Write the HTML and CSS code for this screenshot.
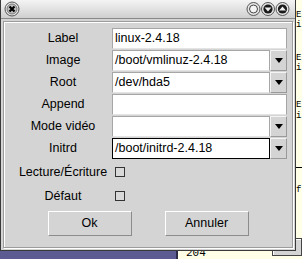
FILE: index.html
```html
<!DOCTYPE html>
<html>
<head>
<meta charset="utf-8">
<link rel="stylesheet" href="styles.css">
</head>
<body>
<div class="desk">
  <div class="term">
    <div class="tl t1">E</div>
    <div class="tl t2">i</div>
    <div class="tl t3">E</div>
    <div class="tl t4">i</div>
    <div class="tl t5">E</div>
    <div class="tl t6">i</div>
    <div class="rule"></div>
    <div class="tl t7">f</div>
  </div>
  <div class="taskbar"></div>
  <div class="term-bottom">204</div>
  <div class="bgframe"></div>

  <div class="win">
    <div class="titlebar">
      <svg class="tbtn" width="16" height="16" viewBox="0 0 16 16">
        <circle cx="8" cy="8" r="7" fill="#e6e6e6" stroke="#555" stroke-width="1"/>
        <circle cx="8" cy="8" r="5" fill="#bdbdbd" stroke="#7a7a7a" stroke-width="1"/>
        <path d="M5.5 5.5 L10.5 10.5 M10.5 5.5 L5.5 10.5" stroke="#000" stroke-width="2.2"/>
      </svg>
      <span class="spacer"></span>
      <svg class="tbtn" width="15" height="16" viewBox="0 0 15 16">
        <circle cx="7.5" cy="8" r="6.5" fill="#e6e6e6" stroke="#555" stroke-width="1"/>
        <circle cx="7.5" cy="8" r="4" fill="#f4f4f4" stroke="#444" stroke-width="1"/>
      </svg>
      <svg class="tbtn" width="14" height="16" viewBox="0 0 14 16">
        <circle cx="7" cy="8" r="6.5" fill="#e6e6e6" stroke="#555" stroke-width="1"/>
        <circle cx="7" cy="8" r="4.6" fill="#1a1a1a"/>
        <path d="M3.6 6.5 L10.4 6.5 L7 10.5 Z" fill="#f0f0f0"/>
      </svg>
      <svg class="tbtn" width="15" height="16" viewBox="0 0 15 16">
        <circle cx="7.5" cy="8" r="6.5" fill="#e6e6e6" stroke="#555" stroke-width="1"/>
        <circle cx="7.5" cy="8" r="4.6" fill="#1a1a1a"/>
        <path d="M4.1 9.5 L10.9 9.5 L7.5 5.5 Z" fill="#f0f0f0"/>
      </svg>
    </div>
    <div class="panel">
      <div class="form">
        <div class="lbl">Label</div>
        <div class="field"><div class="entry">linux-2.4.18</div></div>

        <div class="lbl">Image</div>
        <div class="field"><div class="entry combo">/boot/vmlinuz-2.4.18</div><div class="drop"><span class="arrow"></span></div></div>

        <div class="lbl">Root</div>
        <div class="field"><div class="entry combo">/dev/hda5</div><div class="drop"><span class="arrow"></span></div></div>

        <div class="lbl">Append</div>
        <div class="field"><div class="entry"></div></div>

        <div class="lbl">Mode vidéo</div>
        <div class="field"><div class="entry combo"></div><div class="drop"><span class="arrow"></span></div></div>

        <div class="lbl">Initrd</div>
        <div class="field"><div class="entry combo focus">/boot/initrd-2.4.18</div><div class="drop"><span class="arrow"></span></div></div>

        <div class="lbl chkrow">Lecture/Écriture</div>
        <div class="field chkrow"><span class="check"></span></div>

        <div class="lbl chkrow">Défaut</div>
        <div class="field chkrow"><span class="check"></span></div>
      </div>
      <div class="buttons">
        <div class="btn">Ok</div>
        <div class="btn">Annuler</div>
      </div>
    </div>
  </div>
</div>
</body>
</html>
```

FILE: styles.css
```css
html, body {
  margin: 0;
  padding: 0;
}
body {
  width: 302px;
  height: 259px;
  overflow: hidden;
  background: #ffffe8;
  font-family: "Liberation Sans", Arial, sans-serif;
}
.desk {
  position: relative;
  width: 302px;
  height: 259px;
  overflow: hidden;
}
.term {
  position: absolute;
  left: 296px;
  top: 0;
  width: 6px;
  height: 259px;
  font-family: "Liberation Mono", monospace;
  font-size: 9px;
  color: #000;
}
.tl {
  position: absolute;
  left: 0;
  line-height: 10px;
  height: 10px;
}
.t1 { top: 10px; }
.t2 { top: 20px; }
.t3 { top: 53px; }
.t4 { top: 63px; }
.t5 { top: 100px; }
.t6 { top: 111px; }
.t7 { top: 185px; }
.rule {
  position: absolute;
  left: 0;
  top: 167px;
  width: 6px;
  height: 1px;
  background: #000;
}
.taskbar {
  position: absolute;
  left: 0;
  top: 251px;
  width: 176px;
  height: 8px;
  background: #5c5c92;
  border-right: 2px solid #2c2c44;
}
.term-bottom {
  position: absolute;
  left: 186px;
  top: 248px;
  font-family: "Liberation Mono", monospace;
  font-size: 11px;
  line-height: 11px;
  color: #000;
}
.bgframe {
  position: absolute;
  left: 272px;
  top: 238px;
  width: 28px;
  height: 16px;
  background: #d4d4d4;
  border: 1px solid #444;
  box-shadow: inset 1px 1px 0 #fff;
}
.win {
  position: absolute;
  left: 0;
  top: 0;
  width: 296px;
  height: 251px;
  box-sizing: border-box;
  background: #d4d4d4;
  border: 1px solid #3a3a3a;
  border-top: none;
  display: flex;
  flex-direction: column;
}
.titlebar {
  height: 18px;
  display: flex;
  align-items: center;
  padding: 0 5px 0 3px;
  background: linear-gradient(#f4f4f4, #e2e2e2 50%, #cfcfcf);
  border-bottom: 1px solid #8a8a8a;
}
.tbtn {
  display: block;
}
.spacer {
  flex: 1;
}
.panel {
  margin: 2px 2px 2px 2px;
  flex: 1;
  border: 1px solid #9c9c9c;
  box-shadow: inset 1px 1px 0 #ffffff, 1px 1px 0 #ffffff;
  padding: 6px 3px 0 10px;
  display: flex;
  flex-direction: column;
}
.form {
  display: grid;
  grid-template-columns: 98px 175px;
  grid-template-rows: repeat(6, 22px) 24px 24px;
}
.lbl {
  font-size: 12.5px;
  color: #000;
  text-align: center;
  line-height: 21px;
}
.lbl.chkrow {
  line-height: 24px;
}
.field {
  display: flex;
  height: 21px;
}
.field.chkrow {
  align-items: center;
  height: 24px;
}
.entry {
  flex: 1;
  box-sizing: border-box;
  height: 21px;
  background: #fff;
  border-top: 1px solid #a6a6a6;
  border-left: 1px solid #a6a6a6;
  border-right: 1px solid #a6a6a6;
  border-bottom: 1px solid #e4e4e4;
  font-size: 12.5px;
  line-height: 19px;
  padding-left: 2px;
  color: #000;
  white-space: nowrap;
  overflow: hidden;
}
.entry.focus {
  border: 1px solid #000;
}
.drop {
  width: 17px;
  box-sizing: border-box;
  height: 21px;
  background: #d4d4d4;
  border-top: 1px solid #f4f4f4;
  border-left: 1px solid #f4f4f4;
  border-right: 1px solid #9a9a9a;
  border-bottom: 1px solid #9a9a9a;
  display: flex;
  align-items: center;
  justify-content: center;
}
.arrow {
  width: 0;
  height: 0;
  border-left: 4px solid transparent;
  border-right: 4px solid transparent;
  border-top: 5px solid #000;
}
.check {
  width: 10px;
  height: 10px;
  box-sizing: border-box;
  margin-left: 3px;
  border: 1px solid #333;
  background: #d8d8d8;
}
.buttons {
  display: flex;
  justify-content: center;
  gap: 33px;
  margin-top: 3px;
  padding-right: 7px;
}
.btn {
  width: 84px;
  height: 25px;
  box-sizing: border-box;
  border-top: 1px solid #fff;
  border-left: 1px solid #fff;
  border-right: 1px solid #8c8c8c;
  border-bottom: 1px solid #8c8c8c;
  background: #d4d4d4;
  font-size: 12.5px;
  text-align: center;
  line-height: 23px;
  color: #000;
}
```
